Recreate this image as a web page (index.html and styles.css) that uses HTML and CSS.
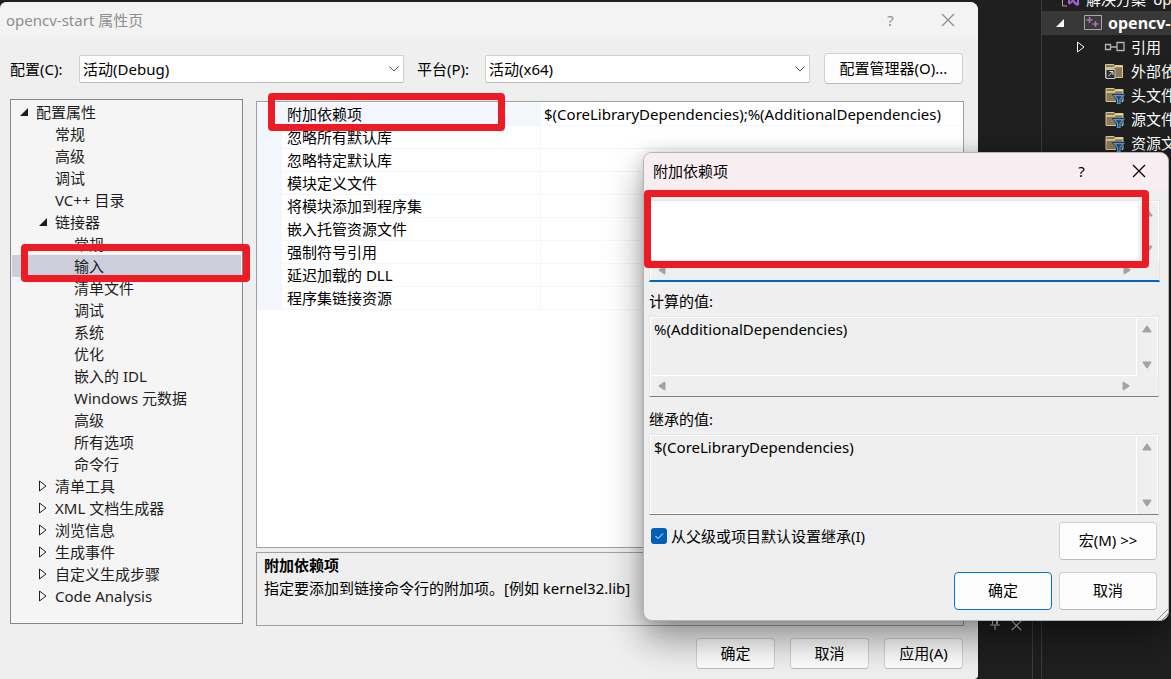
FILE: index.html
```html
<!DOCTYPE html>
<html lang="zh-CN">
<head>
<meta charset="utf-8">
<title>opencv-start 属性页</title>
<link rel="stylesheet" href="styles.css">
</head>
<body>
<svg class="defs" aria-hidden="true">
  <symbol id="open" viewBox="0 0 10 10"><path d="M9 1v8H1z" fill="currentColor"/></symbol>
  <symbol id="closed" viewBox="0 0 10 12"><path d="M1.500 1v10l6.500-5z" fill="none" stroke="currentColor"/></symbol>
  <symbol id="chevron" viewBox="0 0 12 12"><path d="M1.500 3.500l4.500 4.500 4.500-4.500" fill="none" stroke="#555"/></symbol>
  <symbol id="close" viewBox="0 0 14 14"><path d="M1 1l12 12M13 1L1 13" fill="none" stroke="currentColor" stroke-width="1.300"/></symbol>
  <symbol id="tri" viewBox="0 0 10 8"><path d="M4.200 .9Q5 .1 5.800 .9L9.300 6.300Q9.600 7.500 8.500 7.500H1.500Q.4 7.500 .7 6.300z" fill="#a3a3a3"/></symbol>
  <symbol id="folder" viewBox="0 0 20 18"><path d="M1.500 2.500H9l2 1h7.500v12h-17z" fill="#8a7a58" stroke="#dcc48c"/><path d="M1.500 6h8l2-1.500h7" fill="none" stroke="#e8d5a2" stroke-width="1.300"/></symbol>
  <symbol id="filter" viewBox="0 0 20 18"><use href="#folder" width="20" height="18"/><path d="M9 9h10.500L16 13.500V18h-3.500v-4.500z" fill="#1f1f1f" stroke="#1f1f1f" stroke-width="2"/><path d="M9.500 9.500h9.500l-3.500 4v4.500h-2.500v-4.500z" fill="#28435c" stroke="#4a9be0" stroke-width="1.300"/></symbol>
</svg>
<div class="desktop">
  <div class="workspace">
    <div class="dock">
      <svg width="12" height="14" viewBox="0 0 12 14"><path d="M3.500 1.500h5v6M3.500 1.500v6M7.500 1.500v6M1 8h10M6 8v5" fill="none" stroke="#c8c8c8"/></svg>
      <svg class="dock-x" width="11" height="11"><use href="#close"/></svg>
    </div>
  </div>
  <aside class="explorer">
    <ul>
      <li class="sol"><svg width="20" height="20" viewBox="0 0 20 20"><path d="M7 3H2.500v14H7" fill="none" stroke="#a8a8a8"/><path d="M8 8l2-1 2.500 2.500L16.500 5l2.500 1v10l-2.500 1-4-4L10 15.500 8 14.500zM10 9.500v3.500l1.500-1.500zM17 8.500L14 11l3 3z" fill="#9564d0" fill-rule="evenodd"/></svg><span>解决方案 'op</span></li>
      <li class="proj"><svg class="arrow" width="10" height="10"><use href="#open"/></svg><svg width="20" height="18" viewBox="0 0 20 18"><path d="M1.500 1.500h17v14h-17z" fill="#3b3b3b" stroke="#a8a8a8"/><path d="M3.500 6h6M6.500 3v6M9.500 10h6M12.500 7v6" fill="none" stroke="#b46cc0" stroke-width="1.600"/></svg><b>opencv-</b></li>
      <li class="item"><svg class="arrow" width="10" height="12"><use href="#closed"/></svg><svg width="21" height="18" viewBox="0 0 21 18"><path d="M1.500 6.500h5v5h-5zM13 4.500h7v8h-7zM6.500 9H13" fill="none" stroke="#b4b4b4" stroke-width="1.300"/></svg><span>引用</span></li>
      <li class="item"><i class="arrow"></i><svg width="21" height="18" viewBox="0 0 21 18"><use href="#folder" width="20" height="18"/><path d="M2 7.500h9v9H2z" fill="#303030" stroke="#c8c8c8"/><path d="M4.500 14l4-4M5.500 9.500H9V13" fill="none" stroke="#e0e0e0"/></svg><span>外部依</span></li>
      <li class="item"><i class="arrow"></i><svg width="21" height="18"><use href="#filter"/></svg><span>头文件</span></li>
      <li class="item"><i class="arrow"></i><svg width="21" height="18"><use href="#filter"/></svg><span>源文件</span></li>
      <li class="item"><i class="arrow"></i><svg width="21" height="18"><use href="#filter"/></svg><span>资源文</span></li>
    </ul>
  </aside>

  <section class="window">
    <header class="titlebar inactive">
      <h1>opencv-start 属性页</h1>
      <button class="caption" aria-label="帮助">?</button>
      <button class="caption" aria-label="关闭"><svg width="14" height="14"><use href="#close"/></svg></button>
    </header>
    <div class="config">
      <label class="config-c" for="cfg">配置(C):</label>
      <div class="combo"><select id="cfg"><option>活动(Debug)</option></select><svg width="12" height="12"><use href="#chevron"/></svg></div>
      <label class="config-p" for="plat">平台(P):</label>
      <div class="combo"><select id="plat"><option>活动(x64)</option></select><svg width="12" height="12"><use href="#chevron"/></svg></div>
      <button class="btn manager">配置管理器(O)...</button>
    </div>
    <div class="panes">
      <ul class="tree">
        <li class="l0"><svg width="10" height="10"><use href="#open"/></svg>配置属性</li>
        <li class="l1">常规</li>
        <li class="l1">高级</li>
        <li class="l1">调试</li>
        <li class="l1">VC++ 目录</li>
        <li class="l1"><svg width="10" height="10"><use href="#open"/></svg>链接器</li>
        <li class="l2">常规</li>
        <li class="l2 selected">输入<span class="mark mark-tree"></span></li>
        <li class="l2">清单文件</li>
        <li class="l2">调试</li>
        <li class="l2">系统</li>
        <li class="l2">优化</li>
        <li class="l2">嵌入的 IDL</li>
        <li class="l2">Windows 元数据</li>
        <li class="l2">高级</li>
        <li class="l2">所有选项</li>
        <li class="l2">命令行</li>
        <li class="l1"><svg width="10" height="12"><use href="#closed"/></svg>清单工具</li>
        <li class="l1"><svg width="10" height="12"><use href="#closed"/></svg>XML 文档生成器</li>
        <li class="l1"><svg width="10" height="12"><use href="#closed"/></svg>浏览信息</li>
        <li class="l1"><svg width="10" height="12"><use href="#closed"/></svg>生成事件</li>
        <li class="l1"><svg width="10" height="12"><use href="#closed"/></svg>自定义生成步骤</li>
        <li class="l1"><svg width="10" height="12"><use href="#closed"/></svg>Code Analysis</li>
      </ul>
      <div class="detail">
        <div class="props">
          <table>
            <tr class="current"><th scope="row">附加依赖项<span class="mark mark-prop"></span></th><td>$(CoreLibraryDependencies);%(AdditionalDependencies)</td></tr>
            <tr><th scope="row">忽略所有默认库</th><td></td></tr>
            <tr><th scope="row">忽略特定默认库</th><td></td></tr>
            <tr><th scope="row">模块定义文件</th><td></td></tr>
            <tr><th scope="row">将模块添加到程序集</th><td></td></tr>
            <tr><th scope="row">嵌入托管资源文件</th><td></td></tr>
            <tr><th scope="row">强制符号引用</th><td></td></tr>
            <tr><th scope="row">延迟加载的 DLL</th><td></td></tr>
            <tr><th scope="row">程序集链接资源</th><td></td></tr>
          </table>
        </div>
        <div class="help"><b>附加依赖项</b><p>指定要添加到链接命令行的附加项。[例如 kernel32.lib]</p></div>
      </div>
    </div>
    <footer class="actions">
      <button class="btn">确定</button>
      <button class="btn">取消</button>
      <button class="btn">应用(A)</button>
    </footer>
  </section>

  <section class="dialog" role="dialog" aria-label="附加依赖项">
    <header class="titlebar">
      <h2>附加依赖项</h2>
      <button class="caption" aria-label="帮助">?</button>
      <button class="caption" aria-label="关闭"><svg width="14" height="14"><use href="#close"/></svg></button>
    </header>
    <div class="fields">
      <div class="edit active">
        <textarea aria-label="附加依赖项" wrap="off"></textarea>
        <div class="vbar"><svg width="10" height="8"><use href="#tri"/></svg><svg class="down" width="10" height="8"><use href="#tri"/></svg></div>
        <div class="hbar"><svg class="left" width="10" height="8"><use href="#tri"/></svg><svg class="right" width="10" height="8"><use href="#tri"/></svg></div>
        <span class="mark mark-edit"></span>
      </div>
      <label for="calc">计算的值:</label>
      <div class="edit">
        <textarea id="calc" readonly wrap="off">%(AdditionalDependencies)</textarea>
        <div class="vbar"><svg width="10" height="8"><use href="#tri"/></svg><svg class="down" width="10" height="8"><use href="#tri"/></svg></div>
        <div class="hbar"><svg class="left" width="10" height="8"><use href="#tri"/></svg><svg class="right" width="10" height="8"><use href="#tri"/></svg></div>
      </div>
      <label for="inh">继承的值:</label>
      <div class="edit tall">
        <textarea id="inh" readonly>$(CoreLibraryDependencies)</textarea>
        <div class="vbar"><svg width="10" height="8"><use href="#tri"/></svg><svg class="down" width="10" height="8"><use href="#tri"/></svg></div>
      </div>
    </div>
    <div class="dialog-row">
      <label class="check"><input type="checkbox" checked><svg width="16" height="16" viewBox="0 0 16 16"><path d="M4.500 8l2.500 2.500L12 5.500" fill="none" stroke="#fff"/></svg>从父级或项目默认设置继承(I)</label>
      <button class="btn big">宏(M) &gt;&gt;</button>
    </div>
    <div class="dialog-row end">
      <button class="btn big default">确定</button>
      <button class="btn big">取消</button>
    </div>
    <svg class="grip" width="12" height="12" viewBox="0 0 12 12"><path d="M1 12L12 1M6 12l6-6" stroke="#8a8a8a" fill="none"/></svg>
  </section>
</div>
</body>
</html>
```
FILE: styles.css
```css
* { box-sizing: border-box; }

body {
  margin: 0;
  background: #1f1f1f;
  color: #000;
  font: 15px/20px "Noto Sans", "Noto Sans CJK SC", sans-serif;
}

h1, h2, p, ul { margin: 0; padding: 0; font-size: 15px; font-weight: 400; }
ul { list-style: none; }
svg { display: block; flex: none; }
button, select, textarea { font: inherit; color: inherit; }
.defs { position: absolute; width: 0; height: 0; }

.desktop {
  position: relative;
  display: flex;
  min-height: 100vh;
  overflow: hidden;
}

/* IDE behind the windows */
.workspace { flex: 1; display: flex; flex-direction: column; justify-content: flex-end; padding-right: 8px; }
.dock {
  display: flex;
  justify-content: flex-end;
  align-items: flex-start;
  gap: 10px;
  height: 64px;
  padding: 2px 10px 0 0;
  border-right: 1px solid #3d3d3d;
  color: #c8c8c8;
}
.dock-x { margin-top: 3px; }
.explorer {
  width: 130px;
  overflow: hidden;
  border-left: 1px solid #3d3d3d;
  color: #fafafa;
}
.explorer ul { margin-top: -13px; }
.explorer li { display: flex; align-items: center; height: 24px; white-space: nowrap; }
.explorer b { font-size: 16px; }
.explorer .sol { padding-left: 18px; gap: 6px; }
.explorer .proj { padding-left: 13px; gap: 5px; background: #383838; }
.explorer .proj .arrow { margin-right: 13px; }
.explorer .item { padding-left: 34px; gap: 6px; }
.explorer .arrow { flex: none; width: 10px; margin-right: 12px; }

/* Windows */
.window {
  position: absolute;
  inset: 2px 193px 0 0;
  display: flex;
  flex-direction: column;
  background: #efefef;
  border-radius: 6px 8px 4px 0;
}
.titlebar { display: flex; align-items: center; height: 37px; padding-bottom: 2px; border-radius: 8px 8px 0 0; }
.titlebar h1, .titlebar h2 { flex: 1; }
.caption {
  display: grid;
  place-items: center;
  width: 57px;
  height: 34px;
  padding: 0;
  border: 0;
  background: none;
}
.inactive { padding: 0 2px 2px 6px; background: #f3f3f3; color: #8e8e8e; }

.btn {
  min-width: 79px;
  height: 31px;
  padding: 0 0 2px;
  border: 1px solid #d0d0d0;
  border-bottom-color: #bababa;
  border-radius: 4px;
  background: #fdfdfd;
}

.config { display: flex; align-items: center; padding: 14px 15px 15px 10px; }
.config-c { width: 69px; }
.config-p { width: 68px; }
.combo { position: relative; flex: 1; margin-right: 13px; }
.combo + .btn { margin-left: 1px; }
.combo select {
  appearance: none;
  display: block;
  width: 100%;
  height: 28px;
  padding: 0 24px 0 3px;
  border: 1px solid #d0d0d0;
  border-bottom-color: #b8b8b8;
  border-radius: 2px;
  background: #fff;
}
.combo svg { position: absolute; right: 4px; top: 8px; pointer-events: none; }
.manager { width: 139px; }

.panes { flex: 1; display: flex; gap: 13px; padding: 0 14px 0 10px; }
.tree {
  width: 233px;
  margin-bottom: 2px;
  padding: 1px;
  border: 1px solid #828790;
  background: #f5f5f5;
  color: #1e1e1e;
}
.tree li { position: relative; display: flex; align-items: center; height: 22px; white-space: nowrap; }
.tree li svg { width: 10px; margin-right: 7px; }
.l0 { padding-left: 7px; }
.l1 { padding-left: 43px; }
.l1:has(svg) { padding-left: 26px; }
.l2 { padding-left: 62px; }
.tree .selected { background: #cccedb; }

.detail { flex: 1; display: flex; flex-direction: column; gap: 4px; min-width: 0; padding-top: 2px; }
.props { flex: 1; padding-top: 1px; border: 1px solid #a0a0a0; background: #fff; }
.props table { width: 100%; border-collapse: separate; border-spacing: 0; table-layout: fixed; }
.props th, .props td {
  height: 23px;
  padding: 0 0 0 3px;
  border-bottom: 1px solid #f3f7fd;
  white-space: nowrap;
  text-align: left;
  font-weight: 400;
}
.props th {
  position: relative;
  width: 284px;
  padding-left: 5px;
  border-left: 25px solid #f3f7fd;
  border-right: 1px solid #f3f7fd;
}
.props .current th { background: #f3f7fd; }
.help { height: 74px; padding: 1px 7px; border: 1px solid #a0a0a0; line-height: 23px; }
.help b { display: block; }

.actions { display: flex; justify-content: flex-end; gap: 15px; padding: 12px 15px 10px; }

.dialog {
  position: absolute;
  right: 2px;
  top: 152px;
  width: 526px;
  border: 1px solid #b4b4b4;
  border-radius: 9px;
  background: #efefef;
  box-shadow: 0 18px 36px rgba(0, 0, 0, 0.4), 0 0 14px rgba(0, 0, 0, 0.14);
}
.dialog .titlebar { padding: 0 1px 2px 9px; background: #f8eef2; }
.fields { display: flex; flex-direction: column; padding: 10px 8px 0 5px; }
.fields label { height: 20px; margin: 9px 0 5px; }
.edit {
  position: relative;
  display: grid;
  grid-template: 1fr 20px / 1fr 21px;
  height: 81px;
  margin-right: 1px;
  border: 1px solid #e6e6e6;
  border-bottom-color: #808080;
}
.edit + label { margin-top: 12px; }
.edit.active { height: 82px; margin-right: 0; border-bottom: 2px solid #0067c0; }
.edit.active + label { margin-top: 9px; }
.edit.tall { grid-template-rows: 1fr; }
.edit textarea {
  display: block;
  width: 100%;
  height: 100%;
  padding: 1px 3px;
  border: 1px solid #fff;
  background: transparent;
  resize: none;
  outline: 0;
  overflow: hidden;
}
.edit.active textarea { background: #fff; }
.vbar {
  grid-row: 1;
  grid-column: 2;
  display: flex;
  flex-direction: column;
  align-items: center;
  justify-content: space-between;
  padding: 7px 0;
  border: solid #fff;
  border-width: 1px 1px 0 0;
}
.hbar {
  grid-column: 1;
  display: flex;
  align-items: center;
  justify-content: space-between;
  padding: 0 6px;
  border-left: 1px solid #fff;
}
.down { transform: rotate(180deg); }
.left { transform: rotate(-90deg); }
.right { transform: rotate(90deg); }

.dialog-row { display: flex; justify-content: space-between; gap: 7px; padding: 7px 11px 6px 7px; }
.dialog-row.end { justify-content: flex-end; padding: 6px 11px 10px; }
.check { position: relative; display: flex; gap: 4px; height: 20px; margin-top: 4px; align-items: center; }
.check input { appearance: none; width: 16px; height: 16px; margin: 0; border-radius: 3px; background: #005fb8; }
.check svg { position: absolute; left: 0; top: 2px; }
.btn.big { width: 98px; height: 38px; }
.btn.default { border-color: #0078d4; }
.grip { position: absolute; right: 0; bottom: 0; }

/* Highlight frames */
.mark {
  position: absolute;
  z-index: 2;
  height: 38px;
  border: 7px solid #ed1c24;
  border-radius: 4px;
  pointer-events: none;
}
.mark-tree { left: 9px; right: -9px; top: -11px; }
.mark-prop { left: -14px; top: -10px; width: 237px; }
.mark-edit { left: -6px; right: 10px; top: -11px; height: 78px; }
```
